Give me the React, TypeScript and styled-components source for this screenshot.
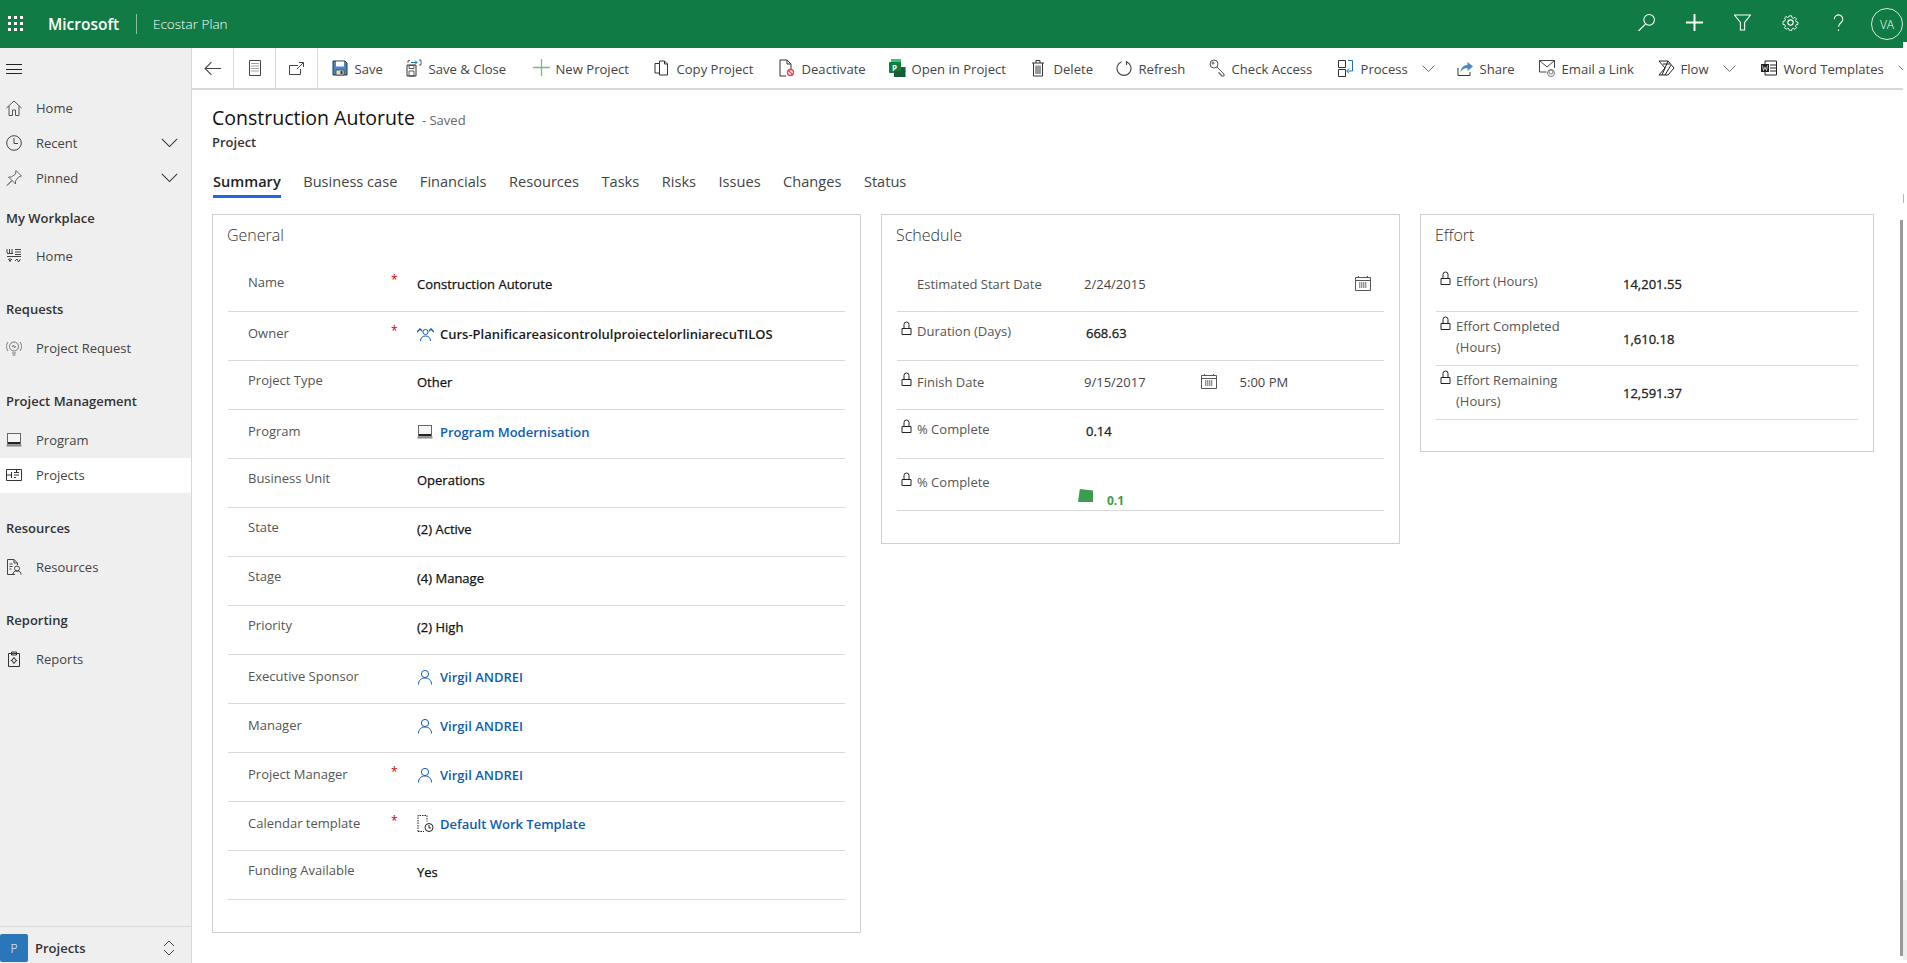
import React from "react";
import styled, { createGlobalStyle } from "styled-components";

const Global = createGlobalStyle`
  html, body { margin: 0; padding: 0; background: #fff; overflow: hidden; }
  body { font-family: "Open Sans", "Liberation Sans", sans-serif; font-size: 13px; color: #333; }
  * { box-sizing: border-box; }
`;

const Page = styled.div`
  width: 1907px; height: 963px; display: flex; flex-direction: column; position: relative; overflow: hidden;
`;
const TopBar = styled.header`
  height: 48px; background: #117b45; display: flex; align-items: center; color: #fff; flex: none; position: relative;
`;
const Notch = styled.span`
  position: absolute; right: 0; bottom: 0; width: 4px; height: 6px; background: #fff;
`;
const Waffle = styled.div`
  width: 48px; display: flex; padding-left: 8px; align-items: center;
`;
const Brand = styled.span`
  font-size: 15.5px; font-weight: 600; width: 88px; letter-spacing: 0;
`;
const AppName = styled.span`
  border-left: 1px solid #8dbda3; height: 20px; line-height: 20px; padding-left: 16px; font-size: 13.5px; font-weight: 300;
`;
const TopActions = styled.div`
  margin-left: auto; display: flex; align-items: center; padding-right: 4px;
`;
const TopIcon = styled.span`
  width: 48px; display: flex; justify-content: center; align-items: center; height: 48px; padding-bottom: 3px;
`;
const Avatar = styled.span`
  width: 32px; height: 32px; border: 1px solid #d7e8de; border-radius: 50%; display: flex; align-items: center; justify-content: center;
  font-size: 12px; margin-left: 9px; font-weight: 300;
`;
const Body = styled.div`
  display: flex; flex: 1; min-height: 0;
`;
const Side = styled.nav`
  width: 192px; background: #efefef; border-right: 1px solid #d8d8d8; display: flex; flex-direction: column; flex: none; color: #3b3b3b;
`;
const Burger = styled.div`
  height: 43px; display: flex; align-items: center; padding: 0 0 1px 6px;
`;
const SideRow = styled.div<{ $active?: boolean }>`
  height: 35px; display: flex; align-items: center; background: ${(p) => (p.$active ? "#fff" : "transparent")}; padding: 0 13px 1px 6px;
`;
const SideIcon = styled.span`
  width: 30px; display: flex; align-items: center; flex: none;
`;
const SideLabel = styled.span`
  font-size: 13px; font-weight: 400; flex: 1; color: #444;
`;
const SideHead = styled.div<{ $first?: boolean }>`
  height: ${(p) => (p.$first ? 43 : 44)}px; margin-top: ${(p) => (p.$first ? 0 : 13)}px; display: flex; align-items: center; padding-left: 6px; font-size: 13px; font-weight: 600; color: #333;
`;
const SideFoot = styled.div`
  margin-top: auto; height: 37px; border-top: 1px solid #d8d8d8; display: flex; align-items: flex-end; padding-right: 16px;
`;
const Badge = styled.span`
  width: 28px; height: 28px; background: #2b76b9; color: #fff; border-radius: 2px; display: flex; align-items: center; justify-content: center; font-size: 12px; font-weight: 300; margin-right: 7px; margin-bottom: 1px;
`;
const FootLabel = styled.span`
  flex: 1; font-weight: 600; font-size: 13px; color: #333; align-self: center; padding-top: 6px;
`;
const FootIcon = styled.span`
  display: flex; align-self: center; padding-top: 6px;
`;
const Main = styled.main`
  flex: 1; min-width: 0; display: flex; flex-direction: column; position: relative;
`;
const Toolbar = styled.div`
  height: 42px; border-bottom: 2px solid #d8d8d8; display: flex; margin-right: 4px; flex: none; white-space: nowrap; overflow: hidden;
`;
const NavButton = styled.div`
  width: 42px; height: 40px; border-right: 1px solid #d8d8d8; display: flex; align-items: center; justify-content: center; flex: none;
`;
const Commands = styled.div`
  display: flex; align-items: center; padding: 1px 0 0 14px; height: 40px;
`;
const Command = styled.div<{ $w: number }>`
  width: ${(p) => p.$w}px; flex: none; display: flex; align-items: center; color: #444; font-size: 13.1px;
`;
const CommandIcon = styled.span`
  width: 22.5px; flex: none; display: flex; align-items: center; margin-top: -2px;
`;
const Caret = styled.span`
  margin-left: 14px; display: flex; align-items: center;
`;
const Content = styled.div`
  padding: 0 0 0 20px; display: flex; flex-direction: column;
`;
const TitleRow = styled.div`
  height: 24px; margin-top: 16px; display: flex; align-items: center;
`;
const Title = styled.h1`
  margin: 0; font-size: 19.5px; font-weight: 400; color: #111; line-height: 24px;
`;
const Saved = styled.span`
  font-size: 13px; color: #666; margin-left: 7px; padding-top: 4px;
`;
const Entity = styled.div`
  height: 20px; line-height: 20px; margin-top: 2px; font-size: 13px; font-weight: 600; color: #333;
`;
const Tabs = styled.div`
  display: flex; height: 36px; margin-top: 10px; padding-left: 1px; gap: 22.5px;
`;
const Tab = styled.div<{ $active?: boolean }>`
  height: 36px; padding-top: 9px; line-height: 20px; font-size: 14.6px; font-weight: ${(p) => (p.$active ? 600 : 400)}; color: ${(p) => (p.$active ? "#222" : "#444")};
  border-bottom: 3px solid ${(p) => (p.$active ? "#2266e3" : "transparent")};
`;
const Cards = styled.div`
  display: flex; gap: 20px; margin-top: 16px; align-items: flex-start;
`;
const Card = styled.section<{ $w: number; $h: number }>`
  width: ${(p) => p.$w}px; height: ${(p) => p.$h}px; border: 1px solid #d0d0d0; padding: 0 15px; flex: none;
`;
const CardTitle = styled.h2`
  margin: 0 0 0 -1px; height: 48px; padding-top: 9px; line-height: 22px; font-size: 16px; font-weight: 300; color: #333;
`;
const GenRow = styled.div<{ $link?: boolean }>`
  height: 49px; border-bottom: 1px solid #d8d8d8; display: grid; grid-template-columns: 20px 143px 26px 1fr; align-items: start;
  --lab: ${(p) => (p.$link ? 11 : 9)}px; --val: ${(p) => (p.$link ? 12 : 11)}px;
`;
const FieldLabel = styled.span`
  grid-column: 2; font-size: 13px; line-height: 20px; color: #555; padding-top: var(--lab); white-space: nowrap;
`;
const Star = styled.span`
  grid-column: 3; color: #d40000; font-size: 12px; line-height: 20px; padding-top: calc(var(--lab) - 2px);
`;
const FieldValue = styled.div`
  grid-column: 4; font-size: 13px; font-weight: 400; -webkit-text-stroke: 0.25px #111; line-height: 20px; padding-top: var(--val); color: #111; display: flex; align-items: center; white-space: nowrap;
`;
const LinkText = styled.span`
  color: #0f5cb5; font-weight: 600; letter-spacing: 0; -webkit-text-stroke: 0;
`;
const OwnerText = styled.span`
  color: #1a1a1a; font-weight: 600; letter-spacing: 0; -webkit-text-stroke: 0;
`;
const ValueIcon = styled.span`
  width: 23px; display: flex; align-items: center; flex: none;
`;
const DataRow = styled.div<{ $h: number; $lab: number; $val: number }>`
  height: ${(p) => p.$h}px; border-bottom: 1px solid #d8d8d8; display: flex; align-items: flex-start; position: relative;
  --lab: ${(p) => p.$lab}px; --val: ${(p) => p.$val}px;
`;
const LockCell = styled.span`
  width: 20px; flex: none; padding-left: 4px; padding-top: var(--lab); display: flex;
`;
const DataLabel = styled.span<{ $wrap?: boolean }>`
  width: 167px; flex: none; font-size: 13px; line-height: 21px; color: #555; padding-top: var(--lab);
  padding-right: ${(p) => (p.$wrap ? 40 : 0)}px;
`;
const DataValue = styled.span<{ $strong?: boolean; $pad?: number }>`
  font-size: 13px; line-height: 20px; padding-top: var(--val); margin-left: ${(p) => p.$pad ?? 0}px;
  color: ${(p) => (p.$strong ? "#222" : "#444")}; -webkit-text-stroke: ${(p) => (p.$strong ? "0.3px #222" : "0")}; white-space: nowrap;
`;
const FloatIcon = styled.span<{ $left: number }>`
  position: absolute; left: ${(p) => p.$left}px; top: 12px; display: flex;
`;
const Flag = styled.span`
  width: 15px; height: 13px; background: #3d9c52; clip-path: polygon(12% 0, 100% 12%, 100% 100%, 0 100%); position: absolute; left: 181px; top: 30px;
`;
const FlagValue = styled.span`
  position: absolute; left: 210px; top: 32px; color: #3d9c52; font-size: 12px; line-height: 20px; font-weight: 700;
`;
const Scroll = styled.div`
  position: absolute; left: 1708px; top: 172px; width: 3px; height: 736px; background: #9a9a9a;
`;
const ScrollTick = styled.div`
  position: absolute; left: 1711px; top: 146px; width: 1px; height: 9px; background: #b5b5b5;
`;
const ScrollTrack = styled.div`
  position: absolute; left: 1711px; top: 832px; width: 4px; height: 80px; background: #eeeeee;
`;

type IconProps = { size?: number; color?: string; children?: React.ReactNode; sw?: number };
const Ico = ({ size = 16, color = "#333", sw = 1, children }: IconProps) => (
  <svg width={size} height={size} viewBox="0 0 16 16" fill="none" stroke={color} strokeWidth={sw}>{children}</svg>
);
const Lock = () => (
  <svg width="11" height="14" viewBox="0 0 11 14" fill="none" stroke="#222"><path d="M1 7.500h9v6H1zM3 7.500V3.500a2.500 2.500 0 0 1 5 0v4" /></svg>
);
const Chevron = ({ w = 16, color = "#444" }: { w?: number; color?: string }) => (
  <svg width={w} height={w * 0.6} viewBox="0 0 20 12" fill="none" stroke={color} strokeWidth="1.2"><path d="M1 1l9 9 9-9" /></svg>
);
const Calendar = () => (
  <Ico color="#555"><path d="M.5 2.500h15v13H.5zM.5 5.500h15M3.500 1v2M12.500 1v2" /><path d="M4 8h8M4 10h8M4 12h8M5 7.500v6M7 7.500v6M9 7.500v6M11 7.500v6" strokeDasharray="1 1" /></Ico>
);
const Person = () => (
  <Ico color="#0f5cb5"><circle cx="8" cy="5" r="3.600" /><path d="M1.500 15.500c0-4 2.500-6.500 6.500-6.500s6.500 2.500 6.500 6.500" /></Ico>
);
const Laptop = ({ size = 16 }: { size?: number }) => (
  <svg width={size} height={size} viewBox="0 0 16 16"><rect x="1.500" y="1.500" width="13" height="10.500" fill="#f5f5f5" stroke="#666" /><rect x="2" y="10" width="12" height="2" fill="#222" /><rect x="0.500" y="12.500" width="15" height="2" fill="#888" /></svg>
);

const commands: { w: number; label: string; icon: React.ReactNode; caret?: boolean }[] = [
  { w: 74, label: "Save", icon: <svg width="16" height="16" viewBox="0 0 16 16"><path d="M1 1h12l2 2v12H1z" fill="#4a8ac4" stroke="#333" /><path d="M4 1.500h8v5H4z" fill="#fff" /><path d="M4 10h8v5H4z" fill="#ddd" stroke="#333" strokeWidth=".7" /><path d="M8.500 11h2v3h-2z" fill="#333" /></svg> },
  { w: 127, label: "Save & Close", icon: <svg width="16" height="18" viewBox="0 0 16 18" fill="none"><path d="M1 6h9v11H1z" stroke="#333" /><path d="M3 12h5v5H3zM3 6.500h5v3H3z" stroke="#333" strokeWidth=".8" /><path d="M4 1.500H2V4M13 1h2v5h-2" stroke="#333" strokeWidth=".8" /><path d="M5 3.500h6M9 1.500l2 2-2 2" stroke="#1c75bc" /></svg> },
  { w: 121, label: "New Project", icon: <Ico color="#6cc08b" size={17} sw={1.200}><path d="M8 0v16M0 8h16" /></Ico> },
  { w: 125, label: "Copy Project", icon: <Ico color="#333"><path d="M5.500 3.500V1h5l3 3v11h-8zM10.500 1v3h3M5.500 3.500h-4.500V13h4.500" /></Ico> },
  { w: 110, label: "Deactivate", icon: <svg width="16" height="18" viewBox="0 0 16 18" fill="none"><path d="M1 17V1h7l4 4v6M8 1v4h4M1 17h6" stroke="#333" /><circle cx="11.500" cy="13.500" r="3" stroke="#e8404a" strokeWidth="1.300" /><path d="M9.500 11.500l4 4" stroke="#e8404a" strokeWidth="1.300" /></svg> },
  { w: 142, label: "Open in Project", icon: <svg width="17" height="18" viewBox="0 0 17 18"><rect x="2" y="0" width="10" height="5" fill="#33c481" /><rect x="0" y="3" width="12" height="11" rx="1" fill="#107c41" /><rect x="5" y="12" width="11.500" height="6" fill="#185c37" /><rect x="12" y="8" width="4.500" height="5" fill="#185c37" /><text x="3" y="11.500" fontSize="8" fontWeight="700" fill="#fff" fontFamily="Open Sans">P</text></svg> },
  { w: 85, label: "Delete", icon: <svg width="16" height="18" viewBox="0 0 16 18" fill="none" stroke="#333"><path d="M1 4h12M5 4V1.500h4V4M2.500 4v13h9V4M5 6.500V15M7 6.500V15M9 6.500V15" /></svg> },
  { w: 93, label: "Refresh", icon: <Ico color="#444" sw={1.100}><path d="M5.500 1.800A7 7 0 1 0 10.500 1.800M10.500 1v4" /></Ico> },
  { w: 129, label: "Check Access", icon: <svg width="17" height="18" viewBox="0 0 17 18" fill="none" stroke="#555"><circle cx="5" cy="5" r="4" /><circle cx="4" cy="4" r="1" /><path d="M8 8l7 7v2h-3v-2h-2v-2" /></svg> },
  { w: 119, label: "Process", caret: true, icon: <svg width="16" height="18" viewBox="0 0 16 18" fill="none"><path d="M.500 1.500h7v7h-7zM.500 10.500h7v7h-7z" stroke="#333" /><path d="M10 1.500h4.500V12H9M11 9.500L8.700 12l2.300 2.500" stroke="#1c75bc" /></svg> },
  { w: 82, label: "Share", icon: <svg width="17" height="18" viewBox="0 0 17 18" fill="none"><path d="M1 9v7.500h12V13" stroke="#333" /><path d="M3.500 13c.5-4.500 3.500-7 7-7V3l5.500 4.500-5.500 4.500V9c-3 0-5 1.200-7 4z" fill="#4a8ac4" /></svg> },
  { w: 119, label: "Email a Link", icon: <svg width="17" height="18" viewBox="0 0 17 18" fill="none" stroke="#444"><path d="M.500 1.500h15V9M.500 1.500V13h7M.500 1.500L8 8l7.500-6.500" /><circle cx="12" cy="13" r="2" stroke="#777" /><circle cx="12" cy="14" r="3.500" stroke="#777" /></svg> },
  { w: 103, label: "Flow", caret: true, icon: <svg width="17" height="16" viewBox="0 0 17 16" fill="none" stroke="#222"><path d="M1 1h9l6 7-6 7H1l6-7zM5 4h7M10 1L4 15M13 5L7 15" /></svg> },
  { w: 130, label: "Word Templates", caret: true, icon: <svg width="16" height="16" viewBox="0 0 16 16" fill="none"><path d="M4 1h11.500v14H4z" stroke="#222" /><path d="M9 5h6M9 8h6M9 11h6" stroke="#222" /><rect x="0" y="4" width="8" height="8" fill="#222" /><path d="M1.500 5.500l1 5 1.500-3.500 1.500 3.500 1-5" stroke="#fff" strokeWidth=".7" /></svg> },
];

const nav = (label: string, icon: React.ReactNode, chevron?: boolean, active?: boolean) => (
  <SideRow $active={active} key={label + (active ? "a" : "")}>
    <SideIcon>{icon}</SideIcon>
    <SideLabel>{label}</SideLabel>
    {chevron && <Chevron w={17} color="#333" />}
  </SideRow>
);

const general: { label: string; value: React.ReactNode; req?: boolean; link?: boolean }[] = [
  { label: "Name", req: true, value: "Construction Autorute" },
  { label: "Owner", req: true, link: true, value: <><ValueIcon><svg width="17" height="14" viewBox="0 0 17 14" fill="none" stroke="#0f5cb5"><circle cx="8.500" cy="5" r="2.600" /><path d="M3.500 14c0-3 2-5 5-5s5 2 5 5" /><path d="M0 5l3-3 2 2M17 5l-3-3-2 2" strokeWidth="1.400" /></svg></ValueIcon><OwnerText>Curs-PlanificareasicontrolulproiectelorliniarecuTILOS</OwnerText></> },
  { label: "Project Type", value: "Other" },
  { label: "Program", link: true, value: <><ValueIcon><Laptop /></ValueIcon><LinkText>Program Modernisation</LinkText></> },
  { label: "Business Unit", value: "Operations" },
  { label: "State", value: "(2) Active" },
  { label: "Stage", value: "(4) Manage" },
  { label: "Priority", value: "(2) High" },
  { label: "Executive Sponsor", link: true, value: <><ValueIcon><Person /></ValueIcon><LinkText>Virgil ANDREI</LinkText></> },
  { label: "Manager", link: true, value: <><ValueIcon><Person /></ValueIcon><LinkText>Virgil ANDREI</LinkText></> },
  { label: "Project Manager", req: true, link: true, value: <><ValueIcon><Person /></ValueIcon><LinkText>Virgil ANDREI</LinkText></> },
  { label: "Calendar template", req: true, link: true, value: <><ValueIcon><svg width="17" height="18" viewBox="0 0 17 18" fill="none"><path d="M1 16.500V.500h9v6M1 16.500h6" stroke="#222" strokeDasharray="1.500 1" /><circle cx="12" cy="12.500" r="4" stroke="#222" /><path d="M12 10v3h2" stroke="#222" /></svg></ValueIcon><LinkText>Default Work Template</LinkText></> },
  { label: "Funding Available", value: "Yes" },
];

export default function App() {
  return (
    <Page>
      <Global />
      <TopBar>
        <Waffle>
          <svg width="16" height="16" viewBox="0 0 16 16" fill="#fff">
            {[1, 7, 13].flatMap((y) => [1, 7, 13].map((x) => <rect key={`${x}-${y}`} x={x - 1} y={y - 1} width="3" height="3" />))}
          </svg>
        </Waffle>
        <Brand>Microsoft</Brand>
        <AppName>Ecostar Plan</AppName>
        <TopActions>
          <TopIcon><Ico size={17} color="#fff"><circle cx="10.500" cy="5.500" r="5" /><path d="M7 9.500L.5 16" /></Ico></TopIcon>
          <TopIcon><Ico size={17} color="#fff" sw={1.800}><path d="M8 0v16M0 8h16" /></Ico></TopIcon>
          <TopIcon><Ico size={17} color="#fff"><path d="M.5 1h15l-5.500 7v7H6V8z" /></Ico></TopIcon>
          <TopIcon><Ico size={17} color="#fff"><circle cx="8" cy="8" r="2.500" /><path d="M6.800 .7h2.400l.4 2 1.500.7 1.800-1 1.700 1.700-1.100 1.700.7 1.500 2 .4v2.400l-2 .4-.7 1.500 1.100 1.700-1.700 1.700-1.800-1-1.500.7-.4 2H6.800l-.4-2-1.500-.7-1.800 1-1.700-1.700 1.100-1.700-.7-1.500-2-.4V6.800l2-.4.7-1.500-1.100-1.700 1.700-1.700 1.800 1 1.500-.7z" transform="translate(1.100 1.100) scale(.86)" /></Ico></TopIcon>
          <TopIcon><Ico size={17} color="#fff"><path d="M4 5a4 4 0 1 1 6.500 3c-1.500 1.200-2.500 2-2.500 4M8 14.500v1.500" /></Ico></TopIcon>
          <Avatar>VA</Avatar>
        </TopActions>
        <Notch />
      </TopBar>
      <Body>
        <Side>
          <Burger>
            <svg width="16" height="12" viewBox="0 0 16 12" stroke="#222"><path d="M0 1.500h16M0 6.500h16M0 10.500h16" /></svg>
          </Burger>
          {nav("Home", <Ico color="#555"><path d="M.5 8L8 1l7.500 7M3 6v9.500h3.500V10h3v5.500H13V6" /></Ico>)}
          {nav("Recent", <Ico color="#444"><circle cx="8" cy="8" r="7.300" /><path d="M8 3v5.500h4" /></Ico>, true)}
          {nav("Pinned", <Ico color="#666"><path d="M10 .5l5.500 5.500-3 1-3 4v3L6 10.500l-5 5 5-5-3.500-3.500h3l4-3z" /></Ico>, true)}
          <SideHead $first>My Workplace</SideHead>
          {nav("Home", <Ico color="#444"><path d="M1 5.500h6M1 1v4M3.500 1v4M6 1v4M9 1.500h6M9 4h6M9 6.500h6M1 8.500h14M2 11l2 2 2-2M4 10v4M9 13l2-2 1.500 3 2-3" /></Ico>)}
          <SideHead>Requests</SideHead>
          {nav("Project Request", <Ico color="#777"><circle cx="8" cy="6.500" r="4.500" /><path d="M6 13h4M6.500 15h3M6 7l1.500-2 1 3L10 6M2 2c-2 3-2 6 0 9M14 2c2 3 2 6 0 9" /></Ico>)}
          <SideHead>Project Management</SideHead>
          {nav("Program", <Laptop />)}
          {nav("Projects", <Ico color="#333"><path d="M.5 2.500h15v11H.5zM.5 8h5M5.500 5v6M8 5.500h5M8 8h5M8 10.500h2M10.500 2.500V6" /></Ico>, false, true)}
          <SideHead>Resources</SideHead>
          {nav("Resources", <Ico color="#444"><path d="M9 15.500H1.500V.5H8l3.500 3.500v2M8 .5V4h3.500M3.500 5h3M3.500 7.500h3M3.500 10h2" /><circle cx="11" cy="9.500" r="2.500" /><path d="M7 15.500c0-2.500 1.500-3.500 4-3.500s4 1 4 3.500" /></Ico>)}
          <SideHead>Reporting</SideHead>
          {nav("Reports", <Ico color="#333"><path d="M2.500 2.500h11v13h-11zM5.500 1h5v3h-5z" /><circle cx="8" cy="9.500" r="2" /><path d="M8 6v1.500M8 11.500V13M4.800 9.500h1.200M10 9.500h1.200" /></Ico>)}
          <SideFoot>
            <Badge>P</Badge>
            <FootLabel>Projects</FootLabel>
            <FootIcon><svg width="12" height="16" viewBox="0 0 12 16" fill="none" stroke="#444"><path d="M1 6l5-5 5 5M1 10l5 5 5-5" /></svg></FootIcon>
          </SideFoot>
        </Side>
        <Main>
          <Toolbar>
            <NavButton><Ico size={17} color="#444"><path d="M16 8H1M7 2L1 8l6 6" /></Ico></NavButton>
            <NavButton><svg width="12" height="16" viewBox="0 0 12 16" fill="none" stroke="#444"><path d="M.5.500h11v15H.5z" /><path d="M2.500 3.500h7M2.500 6h7M2.500 8.500h7M2.500 11h7" strokeDasharray="1 1" /></svg></NavButton>
            <NavButton><svg width="15" height="13" viewBox="0 0 15 13" fill="none" stroke="#444"><path d="M9 3.500H.5V12.500H11.500V7" /><path d="M8 7l6-6M10 .5h4.500V5" /></svg></NavButton>
            <Commands>
              {commands.map((c) => (
                <Command $w={c.w} key={c.label}>
                  <CommandIcon>{c.icon}</CommandIcon>
                  <span>{c.label}</span>
                  {c.caret && <Caret><Chevron w={13} /></Caret>}
                </Command>
              ))}
            </Commands>
          </Toolbar>
          <Content>
            <TitleRow>
              <Title>Construction Autorute</Title>
              <Saved>- Saved</Saved>
            </TitleRow>
            <Entity>Project</Entity>
            <Tabs>
              <Tab $active>Summary</Tab>
              <Tab>Business case</Tab>
              <Tab>Financials</Tab>
              <Tab>Resources</Tab>
              <Tab>Tasks</Tab>
              <Tab>Risks</Tab>
              <Tab>Issues</Tab>
              <Tab>Changes</Tab>
              <Tab>Status</Tab>
            </Tabs>
            <Cards>
              <Card $w={649} $h={719}>
                <CardTitle>General</CardTitle>
                {general.map((f) => (
                  <GenRow $link={f.link} key={f.label}>
                    <FieldLabel>{f.label}</FieldLabel>
                    {f.req && <Star>*</Star>}
                    <FieldValue>{f.value}</FieldValue>
                  </GenRow>
                ))}
              </Card>
              <Card $w={519} $h={330}>
                <CardTitle>Schedule</CardTitle>
                <DataRow $h={49} $lab={11} $val={11}>
                  <LockCell />
                  <DataLabel>Estimated Start Date</DataLabel>
                  <DataValue>2/24/2015</DataValue>
                  <FloatIcon $left={458}><Calendar /></FloatIcon>
                </DataRow>
                <DataRow $h={49} $lab={9} $val={11}>
                  <LockCell><Lock /></LockCell>
                  <DataLabel>Duration (Days)</DataLabel>
                  <DataValue $strong $pad={2}>668.63</DataValue>
                </DataRow>
                <DataRow $h={49} $lab={11} $val={11}>
                  <LockCell><Lock /></LockCell>
                  <DataLabel>Finish Date</DataLabel>
                  <DataValue>9/15/2017</DataValue>
                  <FloatIcon $left={304}><Calendar /></FloatIcon>
                  <DataValue $pad={94}>5:00 PM</DataValue>
                </DataRow>
                <DataRow $h={49} $lab={9} $val={11}>
                  <LockCell><Lock /></LockCell>
                  <DataLabel>% Complete</DataLabel>
                  <DataValue $strong $pad={2}>0.14</DataValue>
                </DataRow>
                <DataRow $h={52} $lab={13} $val={11}>
                  <LockCell><Lock /></LockCell>
                  <DataLabel>% Complete</DataLabel>
                  <Flag />
                  <FlagValue>0.1</FlagValue>
                </DataRow>
              </Card>
              <Card $w={454} $h={238}>
                <CardTitle>Effort</CardTitle>
                <DataRow $h={49} $lab={8} $val={11}>
                  <LockCell><Lock /></LockCell>
                  <DataLabel>Effort (Hours)</DataLabel>
                  <DataValue $strong>14,201.55</DataValue>
                </DataRow>
                <DataRow $h={54} $lab={4} $val={17}>
                  <LockCell><Lock /></LockCell>
                  <DataLabel $wrap>Effort Completed (Hours)</DataLabel>
                  <DataValue $strong>1,610.18</DataValue>
                </DataRow>
                <DataRow $h={54} $lab={4} $val={17}>
                  <LockCell><Lock /></LockCell>
                  <DataLabel $wrap>Effort Remaining (Hours)</DataLabel>
                  <DataValue $strong>12,591.37</DataValue>
                </DataRow>
              </Card>
            </Cards>
          </Content>
          <Scroll />
          <ScrollTick />
          <ScrollTrack />
        </Main>
      </Body>
    </Page>
  );
}
